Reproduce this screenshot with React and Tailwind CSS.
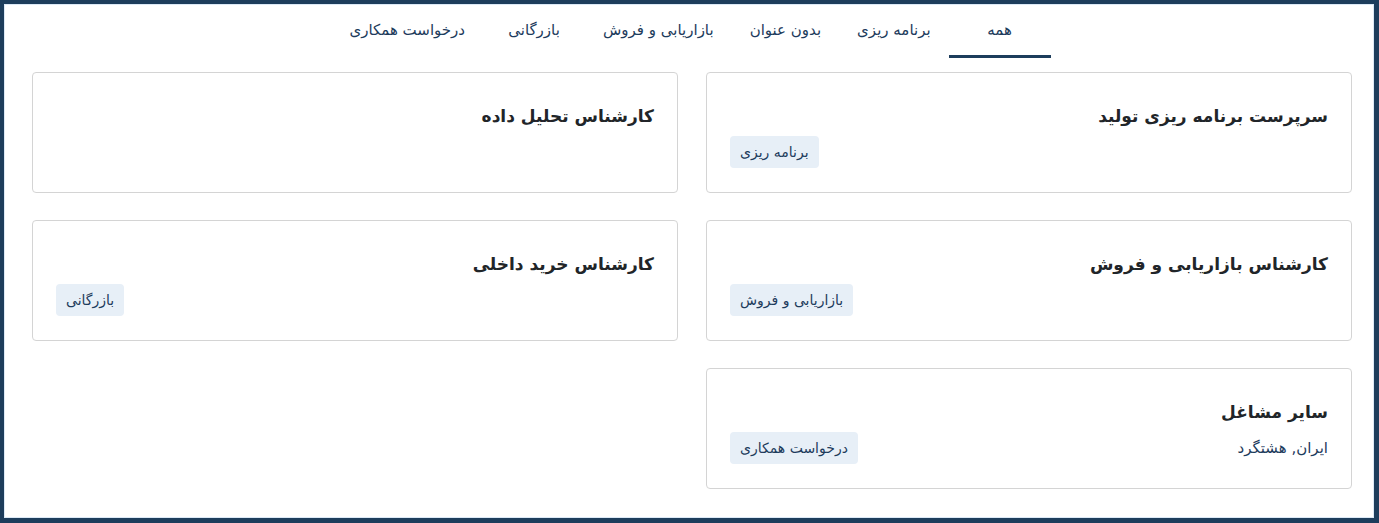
import React from 'react';

const tabs = ['همه', 'برنامه ریزی', 'بدون عنوان', 'بازاریابی و فروش', 'بازرگانی', 'درخواست همکاری'];

const jobs = [
  { title: 'سرپرست برنامه ریزی تولید', tag: 'برنامه ریزی' },
  { title: 'کارشناس تحلیل داده' },
  { title: 'کارشناس بازاریابی و فروش', tag: 'بازاریابی و فروش' },
  { title: 'کارشناس خرید داخلی', tag: 'بازرگانی' },
  { title: 'سایر مشاغل', place: 'ایران, هشتگرد', tag: 'درخواست همکاری' },
];

export default function App() {
  return (
    <div
      dir="rtl"
      className="h-[523px] w-[1379px] border-t-4 border-l-4 border-r-[5px] border-b-[5px] border-[#1d3d5c] bg-white"
      style={{ fontFamily: '"DejaVu Sans", sans-serif' }}
    >
      <div className="h-full border border-[#dce9f6] pl-[27px] pr-[21px]">
        <nav className="flex justify-center pr-[2px]">
          {tabs.map((t, i) => (
            <button
              key={t}
              className={`min-w-[102px] px-[18px] pt-[13px] pb-[13px] text-[15px] leading-6 text-[#1d3b5c] border-b-[3px] ${
                i === 0 ? 'border-[#1d3d5c]' : 'border-transparent'
              }`}
            >
              {t}
            </button>
          ))}
        </nav>

        <div className="mt-[14px] grid grid-cols-2 gap-x-[28px] gap-y-[27px]">
          {jobs.map((j) => (
            <div key={j.title} className="h-[121px] rounded border border-[#d4d4d4] px-[23px] pt-[28px] pb-[22px]">
              <h3 className="h-[30px] text-[17px] font-bold leading-[30px] text-[#212529]">{j.title}</h3>
              <div className="mt-[5px] flex items-center justify-between">
                <span className="text-[15px] text-[#1d3b5c]">{j.place}</span>
                {j.tag && (
                  <span className="rounded bg-[#e7eff7] px-[10px] text-[14px] leading-8 text-[#1d3b5c]">{j.tag}</span>
                )}
              </div>
            </div>
          ))}
        </div>
      </div>
    </div>
  );
}
